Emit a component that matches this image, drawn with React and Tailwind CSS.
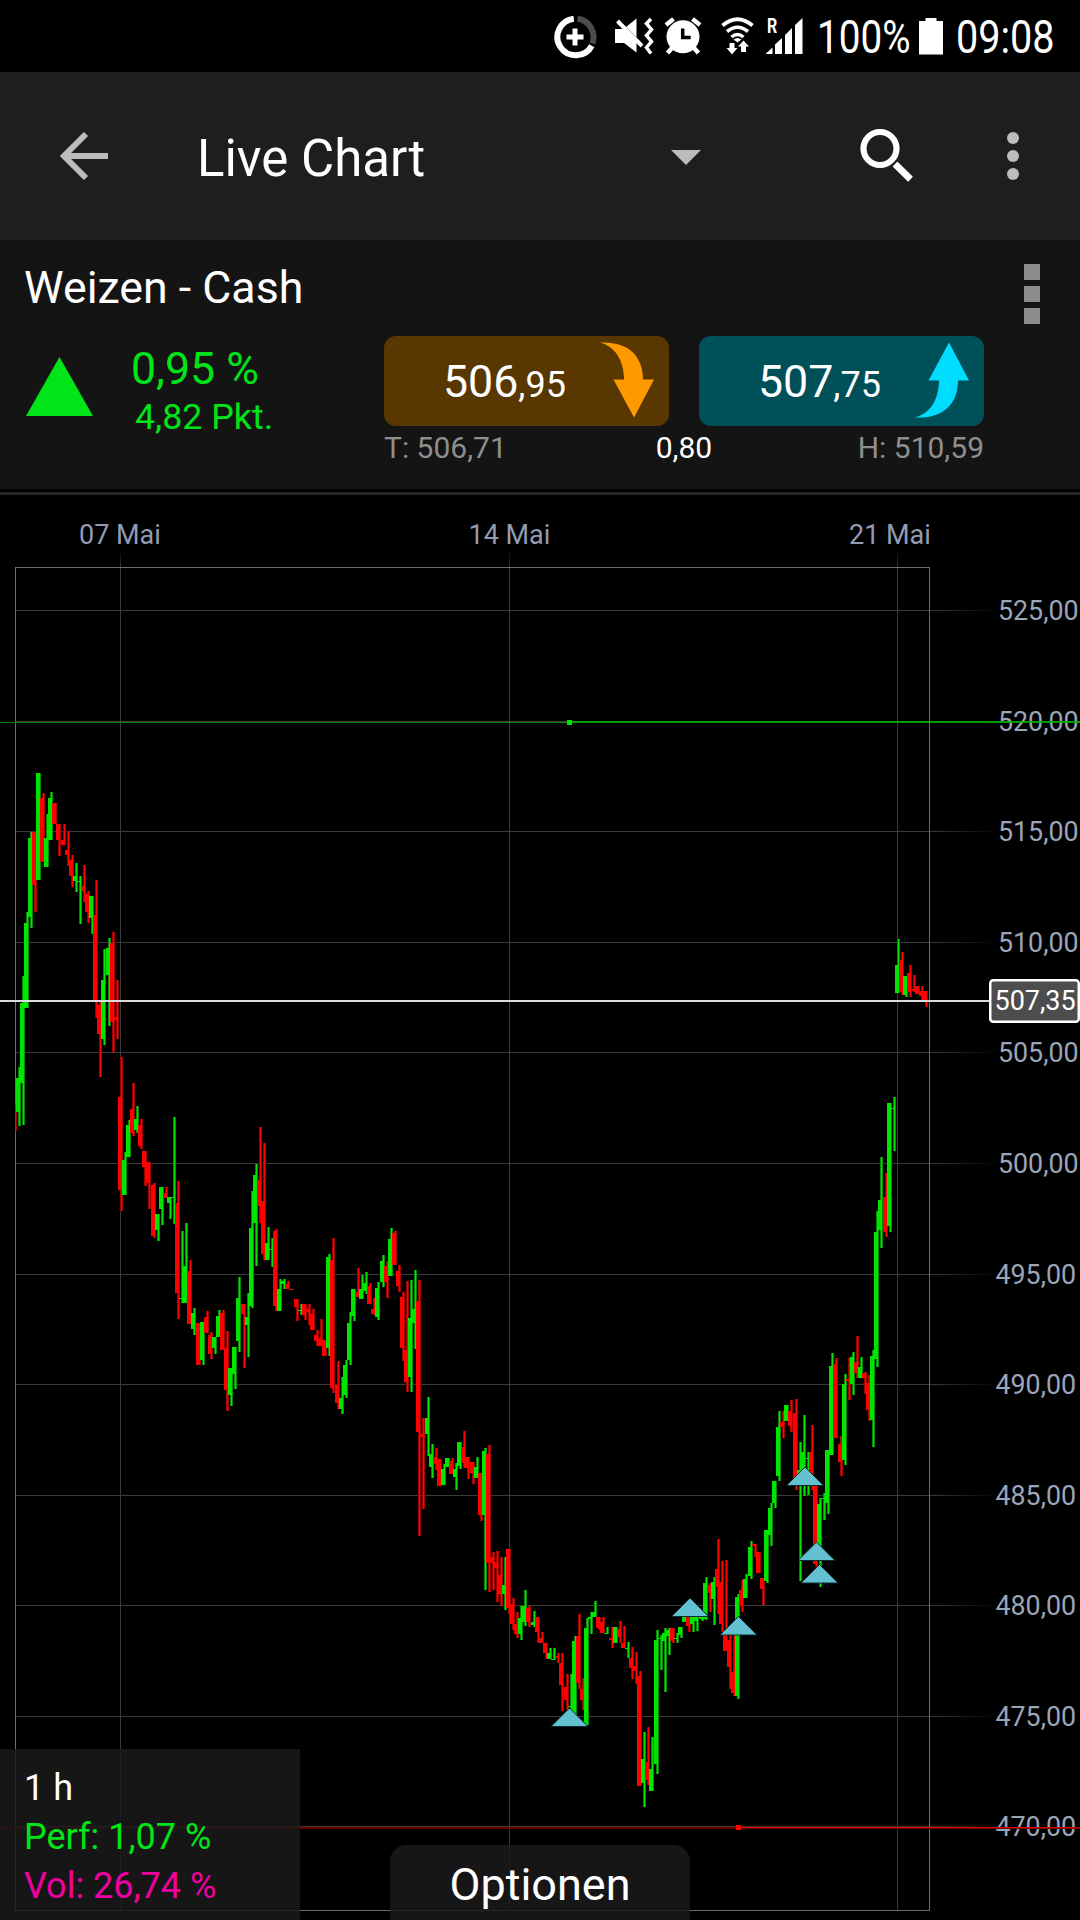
const UP = "#00e400";
const UP_DARK = "#008a00";
const DOWN = "#ff0000";
const DOWN_DARK = "#a00000";

// x, body top, body bottom, wick top, wick bottom (negative x marks a falling candle)
const CANDLES = [
  [-12, 1105, 1131, 1105, 1131], [16, 1078, 1112, 1067, 1126], [20, 1003, 1083, 976, 1125], [24, 923, 1008, 912, 1008],
  [28, 838, 917, 832, 928], [-32, 832, 885, 832, 912], [36, 773, 880, 773, 880], [-40, 798, 862, 793, 862],
  [44, 838, 867, 814, 867], [48, 798, 840, 792, 840], [-52, 803, 824, 803, 824], [-56, 824, 840, 824, 856],
  [-61, 840, 845, 824, 845], [-65, 850, 855, 831, 866], [-69, 860, 876, 855, 887], [73, 876, 881, 863, 892],
  [77, 881, 882, 876, 924], [-81, 886, 891, 865, 902], [-85, 894, 912, 891, 923], [89, 896, 918, 896, 934],
  [-93, 915, 1001, 880, 1018], [-97, 1005, 1034, 1001, 1077], [101, 980, 1039, 949, 1045], [106, 948, 975, 938, 1026],
  [-110, 943, 1022, 932, 1052], [-114, 1017, 1020, 980, 1039], [-118, 1097, 1190, 1057, 1211], [122, 1160, 1195, 1152, 1195],
  [126, 1125, 1157, 1120, 1157], [-130, 1109, 1133, 1083, 1136], [134, 1119, 1130, 1106, 1133], [-138, 1125, 1146, 1119, 1149],
  [-142, 1151, 1167, 1151, 1186], [-146, 1162, 1183, 1162, 1209], [-151, 1185, 1236, 1183, 1238], [155, 1214, 1230, 1214, 1241],
  [159, 1187, 1209, 1187, 1225], [-163, 1193, 1198, 1187, 1198], [167, 1197, 1203, 1197, 1219], [171, 1197, 1198, 1117, 1224],
  [-175, 1203, 1293, 1181, 1319], [179, 1298, 1299, 1231, 1303], [183, 1266, 1303, 1223, 1303], [-187, 1271, 1324, 1260, 1324],
  [191, 1313, 1329, 1308, 1335], [-196, 1323, 1365, 1323, 1365], [200, 1322, 1360, 1322, 1365], [-204, 1317, 1333, 1311, 1333],
  [-208, 1335, 1354, 1332, 1359], [212, 1337, 1348, 1337, 1354], [216, 1316, 1337, 1310, 1337], [-220, 1313, 1350, 1310, 1350],
  [-224, 1348, 1390, 1331, 1411], [228, 1368, 1395, 1368, 1406], [232, 1347, 1374, 1347, 1389], [236, 1298, 1341, 1277, 1352],
  [-241, 1304, 1314, 1304, 1368], [245, 1317, 1325, 1293, 1357], [249, 1228, 1306, 1191, 1308], [253, 1175, 1223, 1164, 1266],
  [-257, 1180, 1206, 1127, 1223], [-261, 1201, 1254, 1143, 1260], [265, 1243, 1260, 1227, 1260], [269, 1249, 1250, 1238, 1267],
  [-273, 1231, 1306, 1229, 1311], [277, 1289, 1311, 1279, 1311], [281, 1281, 1284, 1279, 1289], [-285, 1284, 1289, 1281, 1289],
  [-289, 1289, 1290, 1289, 1290], [-294, 1299, 1307, 1299, 1321], [298, 1310, 1311, 1304, 1315], [-302, 1304, 1315, 1304, 1320],
  [-306, 1309, 1312, 1304, 1325], [-310, 1314, 1330, 1309, 1330], [-314, 1335, 1341, 1330, 1346], [-318, 1338, 1346, 1319, 1346],
  [-322, 1340, 1356, 1340, 1356], [326, 1257, 1348, 1254, 1356], [-330, 1260, 1388, 1238, 1393], [-335, 1385, 1403, 1361, 1409],
  [339, 1398, 1409, 1377, 1414], [343, 1365, 1395, 1360, 1398], [347, 1323, 1360, 1312, 1365], [351, 1289, 1316, 1289, 1321],
  [-355, 1292, 1297, 1268, 1297], [359, 1289, 1299, 1275, 1299], [363, 1283, 1291, 1272, 1294], [-367, 1286, 1304, 1283, 1304],
  [-371, 1309, 1314, 1298, 1315], [375, 1288, 1317, 1282, 1320], [380, 1261, 1282, 1255, 1287], [-384, 1266, 1282, 1261, 1298],
  [388, 1239, 1276, 1228, 1276], [-392, 1233, 1265, 1231, 1265], [-396, 1271, 1286, 1265, 1292], [-400, 1297, 1348, 1292, 1361],
  [-404, 1350, 1382, 1281, 1392], [408, 1318, 1377, 1280, 1392], [412, 1309, 1323, 1270, 1349], [-416, 1301, 1432, 1280, 1536],
  [-420, 1434, 1437, 1418, 1509], [425, 1418, 1434, 1397, 1456], [429, 1454, 1467, 1444, 1478], [-433, 1457, 1464, 1448, 1470],
  [-437, 1459, 1486, 1459, 1486], [441, 1469, 1485, 1464, 1485], [445, 1458, 1467, 1458, 1467], [-449, 1461, 1474, 1458, 1474],
  [453, 1469, 1477, 1463, 1490], [457, 1442, 1466, 1442, 1469], [-461, 1447, 1463, 1431, 1468], [-465, 1457, 1468, 1457, 1479],
  [-470, 1462, 1473, 1462, 1484], [474, 1467, 1478, 1457, 1478], [-478, 1473, 1515, 1473, 1521], [482, 1451, 1515, 1448, 1590],
  [-486, 1454, 1563, 1445, 1592], [-490, 1557, 1563, 1552, 1590], [-494, 1562, 1568, 1551, 1602], [-498, 1575, 1594, 1557, 1606],
  [502, 1585, 1594, 1557, 1610], [-506, 1549, 1608, 1549, 1614], [-510, 1604, 1624, 1598, 1630], [-514, 1624, 1634, 1612, 1638],
  [518, 1618, 1634, 1606, 1640], [522, 1606, 1622, 1590, 1626], [-526, 1608, 1622, 1606, 1627], [531, 1622, 1625, 1611, 1627],
  [-535, 1617, 1632, 1617, 1643], [-539, 1638, 1643, 1632, 1643], [-543, 1643, 1653, 1643, 1659], [547, 1653, 1659, 1648, 1659],
  [551, 1659, 1660, 1648, 1660], [-555, 1656, 1658, 1653, 1663], [-559, 1663, 1685, 1653, 1711], [-564, 1687, 1700, 1674, 1710],
  [568, 1706, 1707, 1674, 1712], [572, 1641, 1715, 1636, 1715], [-576, 1636, 1683, 1614, 1689], [-580, 1689, 1700, 1678, 1710],
  [584, 1628, 1725, 1618, 1725], [588, 1617, 1619, 1612, 1634], [592, 1612, 1617, 1601, 1617], [-596, 1617, 1628, 1617, 1630],
  [-600, 1622, 1633, 1617, 1633], [604, 1633, 1634, 1627, 1634], [-609, 1638, 1640, 1627, 1648], [613, 1627, 1643, 1627, 1643],
  [-617, 1629, 1637, 1621, 1643], [-621, 1643, 1648, 1626, 1648], [625, 1648, 1649, 1642, 1658], [-629, 1658, 1668, 1647, 1679],
  [-633, 1666, 1671, 1652, 1684], [-637, 1676, 1786, 1671, 1786], [641, 1759, 1783, 1732, 1807], [-645, 1762, 1780, 1727, 1785],
  [649, 1769, 1791, 1737, 1791], [654, 1640, 1764, 1630, 1774], [658, 1638, 1639, 1635, 1670], [662, 1633, 1641, 1628, 1692],
  [666, 1630, 1636, 1628, 1655], [-670, 1628, 1641, 1628, 1643], [674, 1638, 1639, 1633, 1643], [678, 1627, 1635, 1627, 1638],
  [682, 1612, 1622, 1612, 1622], [-686, 1612, 1626, 1612, 1632], [690, 1614, 1624, 1612, 1632], [694, 1612, 1621, 1612, 1631],
  [699, 1617, 1619, 1615, 1621], [703, 1583, 1619, 1577, 1620], [-707, 1585, 1593, 1583, 1612], [711, 1582, 1599, 1577, 1625],
  [-715, 1569, 1587, 1539, 1614], [-719, 1582, 1624, 1561, 1632], [-723, 1630, 1651, 1560, 1651], [-727, 1640, 1667, 1632, 1689],
  [-731, 1672, 1693, 1635, 1696], [735, 1597, 1696, 1594, 1699], [-739, 1590, 1606, 1580, 1612], [743, 1579, 1598, 1574, 1598],
  [748, 1547, 1576, 1541, 1579], [-752, 1544, 1546, 1544, 1557], [-756, 1552, 1573, 1552, 1573], [-760, 1578, 1589, 1578, 1605],
  [764, 1530, 1581, 1530, 1583], [768, 1508, 1535, 1503, 1546], [772, 1481, 1503, 1481, 1508], [776, 1427, 1476, 1411, 1481],
  [-780, 1422, 1427, 1411, 1438], [784, 1405, 1421, 1405, 1421], [-788, 1411, 1426, 1400, 1432], [-793, 1413, 1478, 1399, 1490],
  [797, 1470, 1474, 1442, 1581], [801, 1452, 1480, 1415, 1496], [805, 1458, 1459, 1452, 1495], [-809, 1452, 1475, 1425, 1490],
  [-813, 1486, 1564, 1486, 1567], [817, 1504, 1550, 1498, 1587], [821, 1498, 1499, 1493, 1520], [825, 1450, 1503, 1450, 1514],
  [829, 1366, 1455, 1353, 1455], [-833, 1364, 1438, 1358, 1438], [-838, 1444, 1462, 1436, 1476], [842, 1384, 1460, 1374, 1465],
  [-846, 1379, 1381, 1358, 1400], [850, 1357, 1384, 1352, 1395], [-854, 1362, 1373, 1336, 1378], [858, 1367, 1378, 1357, 1378],
  [-862, 1373, 1378, 1372, 1394], [-866, 1383, 1410, 1375, 1421], [870, 1356, 1420, 1350, 1447], [874, 1232, 1359, 1211, 1367],
  [878, 1200, 1230, 1157, 1248], [-883, 1197, 1232, 1173, 1237], [887, 1103, 1226, 1103, 1232], [891, 1108, 1109, 1097, 1151],
  [895, 965, 993, 939, 993], [-899, 960, 992, 952, 995], [903, 976, 995, 976, 997], [-907, 973, 992, 965, 997],
  [-911, 989, 991, 975, 992], [-915, 986, 994, 986, 994], [-919, 991, 996, 986, 1000], [-923, 991, 1000, 991, 1007],
];

const LEVELS = [
  ["525,00", 610], ["520,00", 721], ["515,00", 831], ["510,00", 942], ["505,00", 1052], ["500,00", 1163],
  ["495,00", 1274], ["490,00", 1384], ["485,00", 1495], ["480,00", 1605], ["475,00", 1716], ["470,00", 1826],
];

const DATES = [["07 Mai", 120, 79], ["14 Mai", 509, 468.5], ["21 Mai", 897, 849]];

const MARKERS = [[569.5, 1708], [690, 1598], [738.5, 1616.5], [805, 1467], [816.5, 1542], [819.5, 1564.5]];

function Candle({ c }) {
  const up = c[0] > 0;
  const x = Math.abs(c[0]);
  return (
    <g>
      <rect x={x + 2} y={c[3]} width="3" height={c[4] - c[3]} fill={up ? UP_DARK : DOWN_DARK} />
      <rect x={x + 3} y={c[3]} width="1" height={c[4] - c[3]} fill={up ? UP : DOWN} />
      <rect x={x} y={c[1]} width="4" height={c[2] - c[1]} fill={up ? UP : DOWN} />
    </g>
  );
}

function Chart() {
  return (
    <svg className="block" width="1080" height="1425" viewBox="0 495 1080 1425" shapeRendering="crispEdges" fontFamily="Roboto, sans-serif" fontSize="27">
      <defs>
        <linearGradient id="fadeRight" x1="930" x2="1000" y1="0" y2="0" gradientUnits="userSpaceOnUse">
          <stop offset="0" stopColor="#3a3a3a" />
          <stop offset="1" stopColor="#3a3a3a" stopOpacity="0" />
        </linearGradient>
        <linearGradient id="fadeUp" x1="0" x2="0" y1="567" y2="549" gradientUnits="userSpaceOnUse">
          <stop offset="0" stopColor="#3a3a3a" />
          <stop offset="1" stopColor="#3a3a3a" stopOpacity="0" />
        </linearGradient>
        <clipPath id="plot">
          <rect x="15" y="567" width="916" height="1343" />
        </clipPath>
      </defs>

      {LEVELS.map(([label, y]) => (
        <g key={label}>
          <rect x="15" y={y} width="915" height="1" fill="#3a3a3a" />
          <rect x="930" y={y} width="70" height="1" fill="url(#fadeRight)" />
        </g>
      ))}
      {DATES.map(([label, x, tx]) => (
        <g key={label}>
          <rect x={x} y="567" width="1" height="1343" fill="#3a3a3a" />
          <rect x={x} y="549" width="1" height="18" fill="url(#fadeUp)" />
          <text x={tx} y="544" fill="#919cb0">{label}</text>
        </g>
      ))}
      <rect x="15" y="567" width="915" height="1" fill="#6c6c6c" />
      <rect x="15" y="1910" width="915" height="1" fill="#6c6c6c" />
      <rect x="15" y="567" width="1" height="1344" fill="#6c6c6c" />
      <rect x="929" y="567" width="1" height="1344" fill="#6c6c6c" />

      <g clipPath="url(#plot)">
        {CANDLES.map((c) => <Candle key={c[0]} c={c} />)}
      </g>

      <g shapeRendering="auto">
        {MARKERS.map(([x, y]) => (
          <path key={x} d={`M${x} ${y}l18.5 18.5h-37z`} fill="#62c0d0" stroke="#0c2a30" strokeWidth="1" />
        ))}
      </g>

      {LEVELS.map(([label, y]) => (
        <text key={label} x={label[0] === "5" ? 998 : 995.5} y={y + 10} fill="#9aa5b8" fontSize="26.8">{label}</text>
      ))}

      <rect x="0" y="722" width="569" height="1" fill="#008800" />
      <rect x="569" y="721" width="511" height="2" fill="#00b400" fillOpacity="0.85" />
      <rect x="567" y="720" width="5" height="5" fill="#00e400" />
      <rect x="0" y="1827" width="738" height="2" fill="#640000" />
      <rect x="738" y="1827" width="342" height="1" fill="#dc0000" />
      <rect x="738" y="1828" width="342" height="1" fill="#780000" />
      <rect x="736" y="1825" width="5" height="5" fill="#ff0000" />

      <rect x="0" y="1000" width="990" height="2" fill="#dcdcdc" />
      <g shapeRendering="auto">
        <rect x="990.25" y="980.25" width="88.5" height="41.5" rx="3" fill="#4d4d4d" stroke="#fff" strokeWidth="2.5" />
        <text x="994.5" y="1010" fill="#fff">507,35</text>
      </g>
    </svg>
  );
}

function StatusBar() {
  return (
    <div className="flex h-[72px] items-start bg-black pl-[553px] text-white">
      <svg className="mt-[15px]" width="44" height="44" viewBox="553.5 14.5 44 44" fill="none" strokeWidth="6">
        <path d="M592.3 45.2A18.3 18.3 0 1 1 574.3 18.3" stroke="#fff" />
        <path d="M578 18.3A18.3 18.3 0 0 1 592.8 43" stroke="#4c4c4c" />
        <path d="M567 36.5h17M575.5 28v17" stroke="#fff" strokeWidth="5" />
      </svg>
      <svg className="ml-[18px] mt-[17px]" width="39" height="38" viewBox="615 17 39 38">
        <path d="M615 29h8.5l13-10.5v34L624 43h-9z" fill="#fff" />
        <path d="M616 18.5L644 47" stroke="#000" strokeWidth="3" />
        <path d="M617.5 21L642 46" stroke="#fff" strokeWidth="4" />
        <path d="M651 19l-4.5 4.5 5 6-5 6 5 6-5 6 4.5 6" fill="none" stroke="#fff" strokeWidth="3.5" />
      </svg>
      <svg className="ml-[10px] mt-[17px]" width="38" height="38" viewBox="664 17 38 38">
        <circle cx="683" cy="36.8" r="16.5" fill="#fff" />
        <path d="M666 25l7.5-6M700 25l-7.5-6" stroke="#fff" strokeWidth="4.5" />
        <path d="M672 48l-4.5 5M694 48l4.5 5" stroke="#fff" strokeWidth="4.5" />
        <path d="M682.7 28.5v9h8" fill="none" stroke="#000" strokeWidth="3.5" />
      </svg>
      <svg className="ml-[18px] mt-[16px]" width="34" height="40" viewBox="720 16 34 40" fill="none" stroke="#fff">
        <path d="M722.5 25.5q15-12.5 30 0" strokeWidth="3.8" />
        <path d="M727 31.5q10.5-8.5 21 0" strokeWidth="3.6" />
        <path d="M731.5 37q6-5 12 0" strokeWidth="3.5" />
        <path d="M733.5 39.5q4-3 8 0l-4 3z" fill="#fff" stroke="none" />
        <path d="M729.5 43h5v5h3l-5.5 6.5-5.5-6.5h3zM741 52h5v-5.5h3l-5.5-6-5.5 6h3z" fill="#fff" stroke="none" />
      </svg>
      <div className="relative ml-[11px] mt-[17px] h-[38px] w-[38px]">
        <svg width="38" height="38" viewBox="765 17 38 38" fill="#fff">
          <path d="M765.5 54l7-6.5V54zM775 54V44.5l7-6.5v16zM785 54V35l7-7v26zM795 54V25l7.5-7v36z" />
        </svg>
        <span className="absolute -top-[0.5px] left-[2px] origin-left scale-x-[0.8] text-[20px] font-bold leading-[18px]">R</span>
      </div>
      <span className="ml-[14px] mt-[9px] w-[102px] origin-left scale-x-[0.85] whitespace-nowrap text-[45.5px] leading-[58px]">100%</span>
      <svg className="mt-[18px]" width="24" height="37" viewBox="0 0 24 37" fill="#fff">
        <path d="M0 3h6.5V0h11v3H24v33.5H0z" />
      </svg>
      <span className="ml-[12.5px] mt-[9px] origin-left scale-x-[0.87] whitespace-nowrap text-[45.5px] leading-[58px]">09:08</span>
    </div>
  );
}

function AppBar() {
  return (
    <header className="flex h-[168px] items-center bg-[#1e1e1e]">
      <svg className="ml-[60px]" width="48" height="50" viewBox="0 0 48 50" fill="none" stroke="#bcbcbc" strokeWidth="6">
        <path d="M48 25H5M26 3L4 25l22 22" />
      </svg>
      <h1 className="ml-[89px] mt-[6px] w-[473.5px] whitespace-nowrap text-[51px] leading-[60px] text-white">Live Chart</h1>
      <svg className="mt-[3px]" width="30" height="15" viewBox="0 0 30 15">
        <path d="M0 0h30L15 15z" fill="#bcbcbc" />
      </svg>
      <svg className="-mt-[2px] ml-[159px]" width="53" height="54" viewBox="860 128 53 54" fill="none" stroke="#fff">
        <circle cx="880" cy="148.5" r="16.5" strokeWidth="6.2" />
        <path d="M895 164l15.5 15.2" strokeWidth="6.8" />
      </svg>
      <div className="ml-[94.5px] flex flex-col gap-[6px]">
        <i className="size-3 rounded-full bg-[#bcbcbc]" />
        <i className="size-3 rounded-full bg-[#bcbcbc]" />
        <i className="size-3 rounded-full bg-[#bcbcbc]" />
      </div>
    </header>
  );
}

function QuotePanel() {
  return (
    <section className="flex h-[249px] flex-col bg-[#141414]">
      <div className="flex h-[96px] items-start justify-between pl-[24px] pr-[40px] pt-6">
        <h2 className="whitespace-nowrap text-[44.7px] leading-[48px] text-white">Weizen - Cash</h2>
        <div className="flex flex-col gap-[6px]">
          <i className="h-4 w-4 bg-[#8c8c8c]" />
          <i className="h-4 w-4 bg-[#8c8c8c]" />
          <i className="h-4 w-4 bg-[#8c8c8c]" />
        </div>
      </div>
      <div className="flex items-start">
        <svg className="ml-[26px] mt-[21px]" width="67" height="59" viewBox="0 0 67 59">
          <path d="M33.5 0L67 59H0z" fill="#00e517" />
        </svg>
        <div className="ml-[38px] w-[253px] pt-[6px] text-[#00e517]">
          <div className="text-[44.7px] leading-[54px]">0,95 %</div>
          <div className="pl-[4px] text-[35.8px] leading-[42px]">4,82 Pkt.</div>
        </div>
        <div className="w-[600px]">
          <div className="flex gap-[30px]">
            <button className="flex h-[90px] w-[285px] items-center rounded-xl bg-[#593700] pl-[59px] pt-[5px] text-white">
              <span className="w-[156.5px] text-left text-[44.7px] leading-[54px]">506<span className="text-[36px]">,95</span></span>
              <svg className="-mt-[7px]" width="54" height="76" viewBox="0 0 54 76">
                <path d="M0 .5C27-1 43 13 43 37.5h11L34 75.5 13.500 37.5H24C24 21 17 5 0 .5z" fill="#ff9900" />
              </svg>
            </button>
            <button className="flex h-[90px] w-[285px] items-center rounded-xl bg-[#00505a] pl-[59px] pt-[5px] text-white">
              <span className="w-[156.5px] text-left text-[44.7px] leading-[54px]">507<span className="text-[36px]">,75</span></span>
              <svg className="-mt-[7px]" width="54" height="76" viewBox="0 0 54 76">
                <path d="M0 75.5C27 77 43 63 43 38.5h11L34 .5 13.500 38.5H24C24 55 17 71 0 75.5z" fill="#00dcff" />
              </svg>
            </button>
          </div>
          <div className="grid grid-cols-3 text-[30px] leading-[44px] text-[#8e8e8e]">
            <span>T: 506,71</span>
            <span className="text-center text-white">0,80</span>
            <span className="text-right">H: 510,59</span>
          </div>
        </div>
      </div>
    </section>
  );
}

export default function App() {
  return (
    <main className="h-[1920px] w-[1080px] overflow-hidden bg-black font-['Roboto',sans-serif]">
      <StatusBar />
      <AppBar />
      <QuotePanel />
      <div className="mt-[3px] h-[3px] bg-[#262626]" />
      <section className="relative h-[1425px]">
        <Chart />
        <div className="absolute bottom-0 left-0 h-[171px] w-[300px] bg-[#1a1a1a]/85 pl-[24px] pt-[15px] text-[36px] leading-[49px] text-white">
          <div>1 h</div>
          <div className="text-[#00e517]">Perf: 1,07 %</div>
          <div className="text-[#f000a0]">Vol: 26,74 %</div>
        </div>
        <button className="absolute bottom-0 left-[390px] h-[75px] w-[300px] rounded-t-2xl bg-[#1a1a1a]/85 pt-[4px] text-[45px] leading-[70px] text-white">
          Optionen
        </button>
      </section>
    </main>
  );
}
